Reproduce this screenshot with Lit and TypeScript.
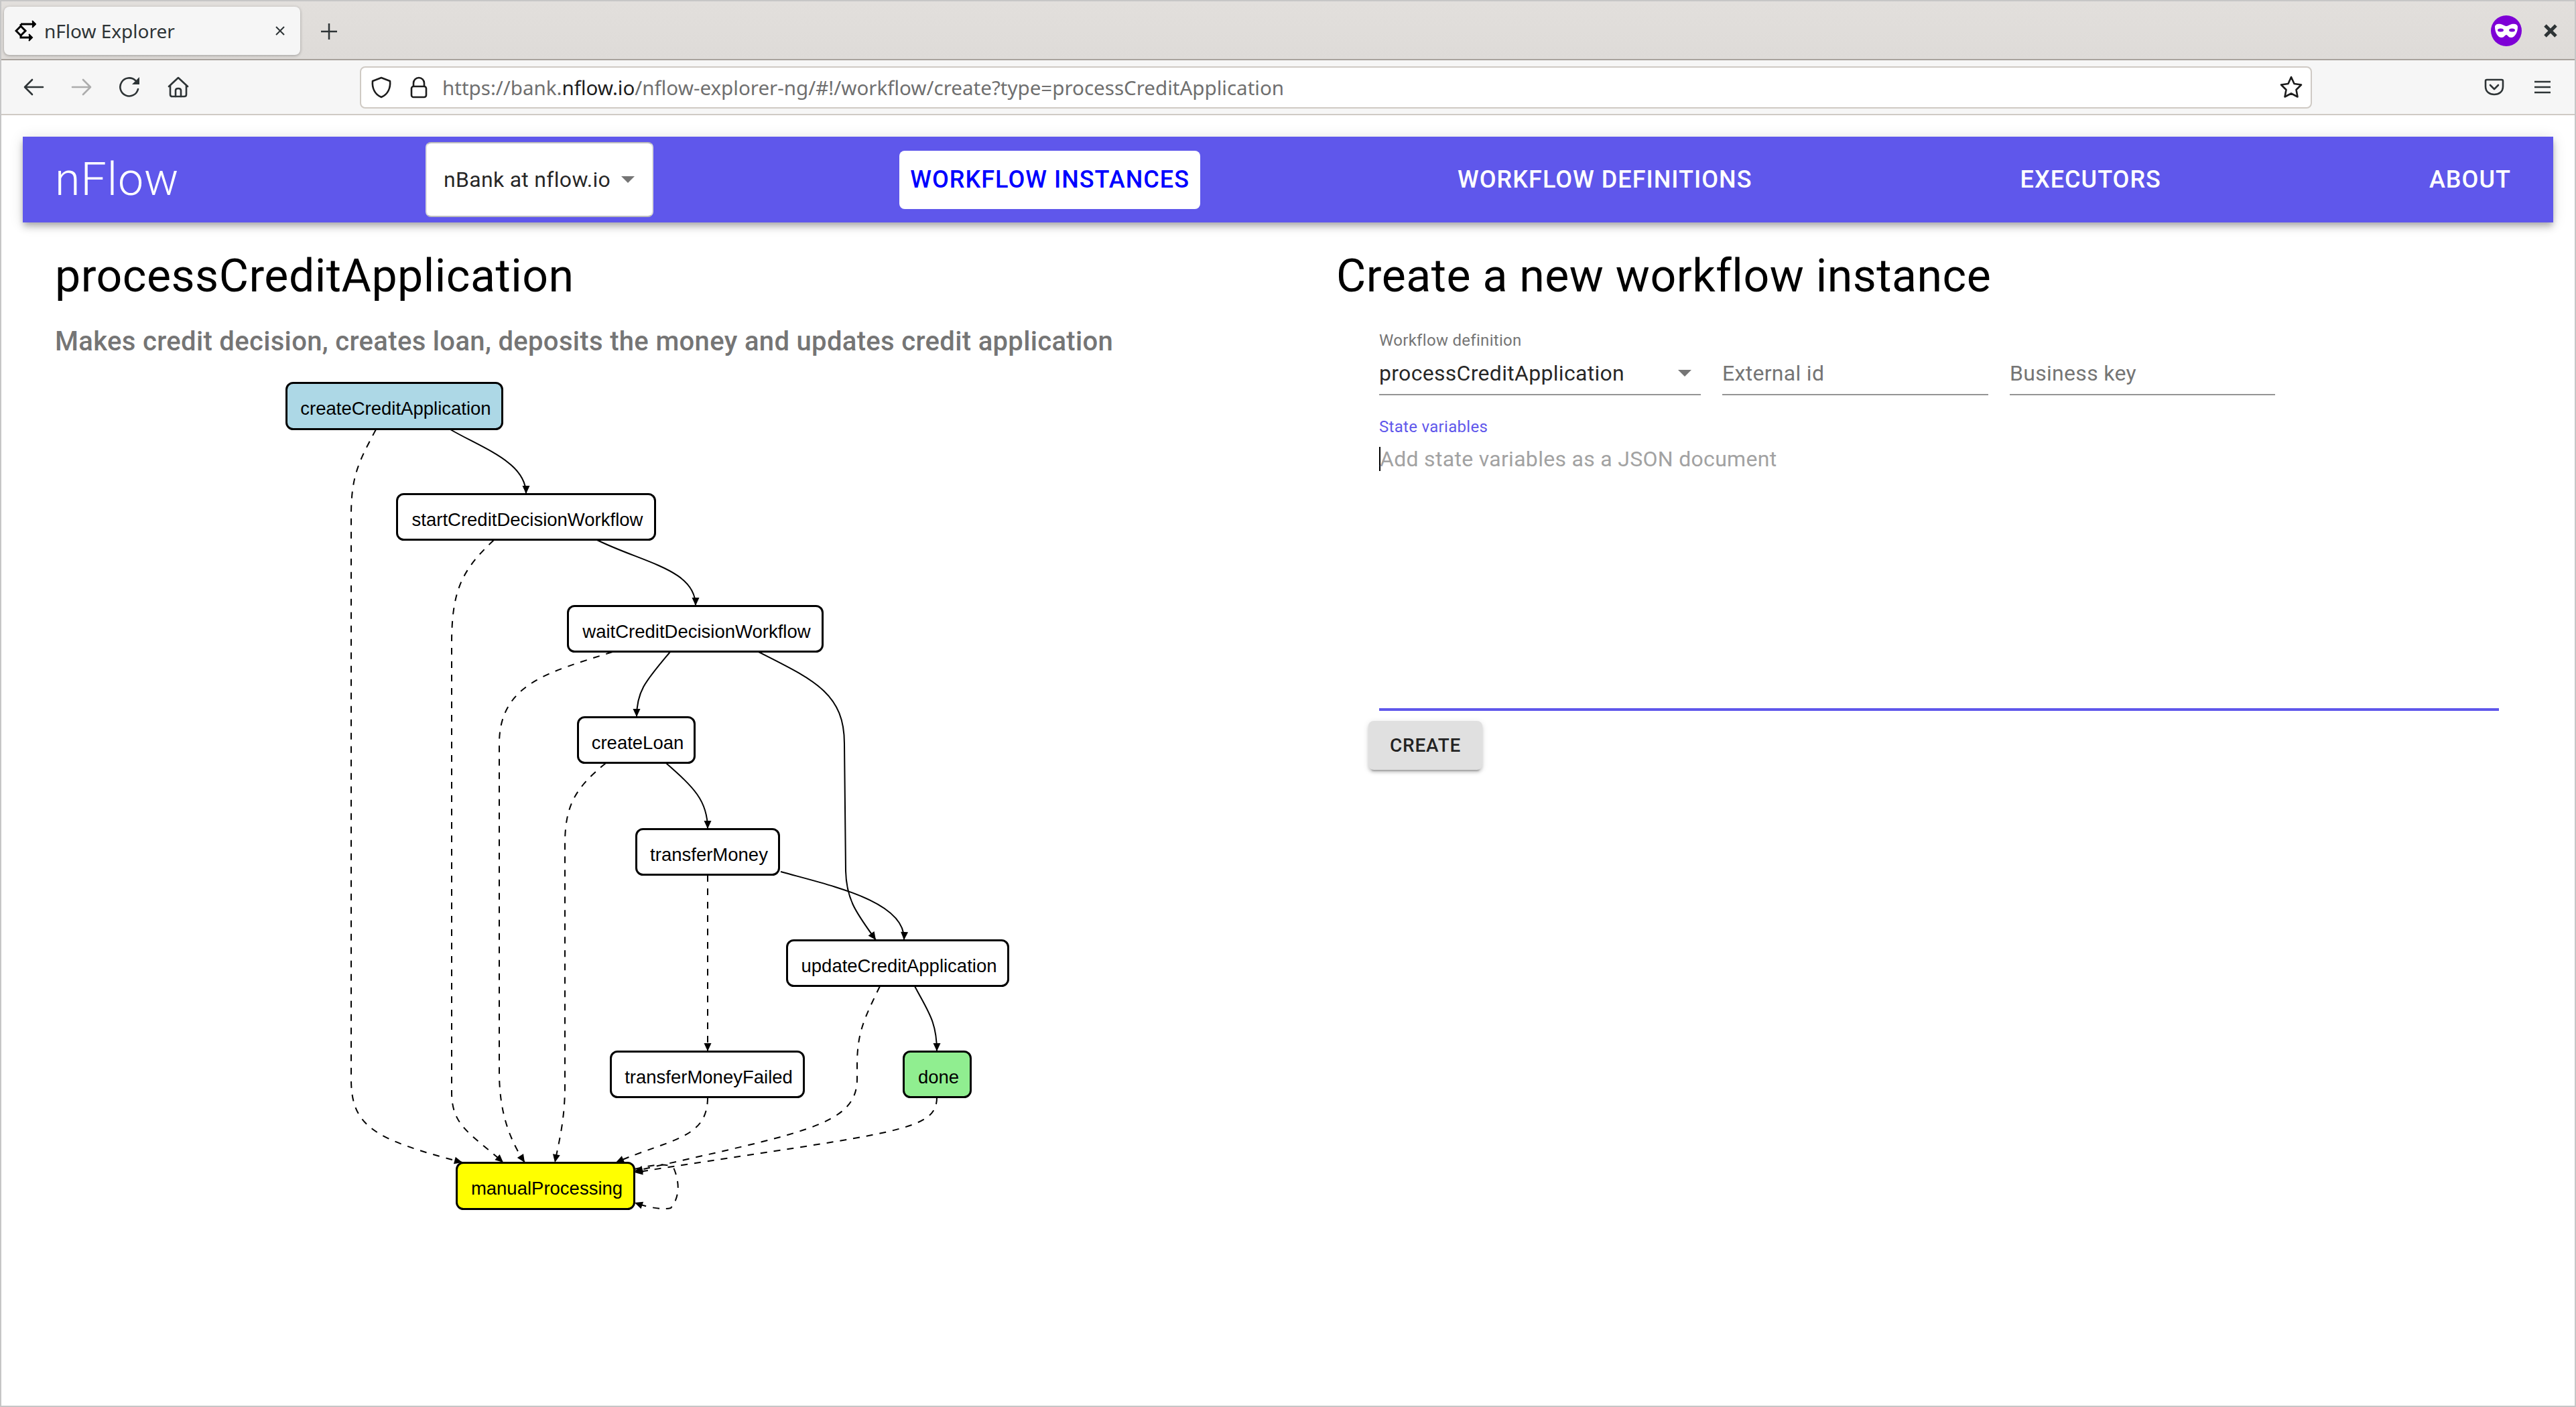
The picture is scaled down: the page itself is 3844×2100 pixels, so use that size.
import { LitElement, html, svg, css } from 'lit'
import { customElement } from 'lit/decorators.js'

interface GraphNode { name: string, x: number, y: number, w: number, h: number, fill: string }
interface GraphEdge { d: string, dashed?: boolean }

const NODES: GraphNode[] = [
  { name: 'createCreditApplication', x: 426, y: 570, w: 325, h: 72, fill: '#add8e6' },
  { name: 'startCreditDecisionWorkflow', x: 591, y: 736, w: 388, h: 71, fill: '#fff' },
  { name: 'waitCreditDecisionWorkflow', x: 846, y: 903, w: 383, h: 71, fill: '#fff' },
  { name: 'createLoan', x: 861, y: 1069, w: 177, h: 71, fill: '#fff' },
  { name: 'transferMoney', x: 948, y: 1236, w: 216, h: 71, fill: '#fff' },
  { name: 'updateCreditApplication', x: 1173, y: 1402, w: 333, h: 71, fill: '#fff' },
  { name: 'transferMoneyFailed', x: 910, y: 1568, w: 291, h: 71, fill: '#fff' },
  { name: 'done', x: 1347, y: 1568, w: 103, h: 71, fill: '#90ee90' },
  { name: 'manualProcessing', x: 680, y: 1734, w: 268, h: 72, fill: '#ffff00' }
]

const EDGES: GraphEdge[] = [
  { d: 'M672,641 C720,669 785,690 785,737' },
  { d: 'M561,641 C535,690 524,710 524,770 L524,1610 C524,1680 555,1700 690,1735', dashed: true },
  { d: 'M891,806 C960,840 1038,850 1038,904' },
  { d: 'M737,806 C690,850 674,880 674,960 L674,1630 C674,1680 700,1690 751,1735', dashed: true },
  { d: 'M1000,973 C965,1015 950,1030 950,1070' },
  { d: 'M914,973 C820,1003 745,1020 745,1110 L745,1600 C745,1660 760,1700 783,1735', dashed: true },
  { d: 'M1132,973 C1215,1015 1260,1035 1260,1110 L1262,1300 C1263,1345 1280,1365 1307,1403' },
  { d: 'M994,1139 C1035,1175 1056,1195 1056,1237' },
  { d: 'M904,1139 C860,1175 843,1200 843,1260 L843,1620 C843,1670 835,1700 828,1735', dashed: true },
  { d: 'M1165,1301 C1240,1322 1352,1345 1349,1403' },
  { d: 'M1056,1306 L1056,1569', dashed: true },
  { d: 'M1056,1638 C1056,1700 1000,1700 919,1735', dashed: true },
  { d: 'M1313,1472 C1290,1520 1279,1540 1279,1590 L1279,1610 C1279,1680 1200,1690 947,1748', dashed: true },
  { d: 'M1365,1472 C1385,1510 1398,1525 1398,1569' },
  { d: 'M1398,1638 C1398,1690 1330,1690 947,1750', dashed: true },
  { d: 'M947,1745 C975,1738 1000,1735 1006,1745 C1016,1770 1012,1790 1001,1803 C990,1806 970,1803 947,1795', dashed: true }
]

@customElement('browser-chrome')
export class BrowserChrome extends LitElement {
  static styles = css`
    :host {
      display: block;
      font-family: "Noto Sans", sans-serif;
    }
    .tabbar {
      display: flex;
      align-items: flex-start;
      height: 88px;
      padding: 8px 0 0 4px;
      box-sizing: border-box;
      background: linear-gradient(#e2dfdc, #dedbd8);
      border-bottom: 2px solid #a8a29d;
    }
    .tab {
      display: flex;
      align-items: center;
      width: 442px;
      height: 72px;
      box-sizing: border-box;
      padding: 0 22px 0 16px;
      background: #f6f6f6;
      border-radius: 8px;
      box-shadow: 0 1px 4px rgba(0, 0, 0, 0.3);
      color: #2e3436;
      font-size: 28px;
    }
    .favicon { margin-right: 12px; flex: none; }
    .tab-title { flex: 1; }
    .newtab { margin: 24px 0 0 30px; }
    .window-controls {
      display: flex;
      align-items: center;
      margin-left: auto;
      gap: 33px;
      padding: 13px 26px 0 0;
    }
    .toolbar {
      display: flex;
      align-items: center;
      height: 82px;
      box-sizing: border-box;
      padding: 0 12px;
      background: #f6f6f6;
      border-bottom: 2px solid #cfcac4;
    }
    .tool {
      display: flex;
      justify-content: center;
      align-items: center;
      width: 72px;
      height: 60px;
      flex: none;
    }
    .urlbar {
      display: flex;
      align-items: center;
      width: 2913px;
      height: 63px;
      margin-left: 235px;
      box-sizing: border-box;
      padding: 0 12px 0 14px;
      background: #fff;
      border: 2px solid #cfcac4;
      border-radius: 8px;
    }
    .url-shield { margin-right: 27px; flex: none; }
    .url-lock { margin-right: 22px; flex: none; }
    .url {
      font-size: 29.55px;
      color: #6f6f6f;
      white-space: nowrap;
    }
    .url b { font-weight: 400; color: #1c1c1c; }
    .star { margin-left: auto; }
    .right-tools { display: flex; margin-left: auto; }
  `

  render () {
    return html`
      <div class="tabbar">
        <div class="tab">
          <svg class="favicon" width="32" height="32" viewBox="0 0 32 32" fill="none" stroke="#000" stroke-width="3">
            <path d="M9,6 L9,9 L16,16 L9,23 L2,16 L9,9"/>
            <path d="M9,6 L28,6"/>
            <path d="M26,1 L31,6 L26,11" fill="#000" stroke-width="2"/>
            <path d="M9,23 L9,26 L23,26"/>
            <path d="M21,21 L26,26 L21,31" fill="#000" stroke-width="2"/>
          </svg>
          <span class="tab-title">nFlow Explorer</span>
          <svg width="16" height="16" viewBox="0 0 16 16" stroke="#2e3436" stroke-width="2">
            <path d="M2,2 L14,14 M14,2 L2,14"/>
          </svg>
        </div>
        <svg class="newtab" width="26" height="26" viewBox="0 0 26 26" stroke="#2e3436" stroke-width="2.5">
          <path d="M13,1 L13,25 M1,13 L25,13"/>
        </svg>
        <div class="window-controls">
          <svg width="46" height="46" viewBox="-23 -23 46 46">
            <circle r="23" fill="#7e00d6"/>
            <path fill="#fff" d="M-17,-6 C-17,-10 -12,-11 -8,-10 C-4,-9 -2,-7 0,-7 C2,-7 4,-9 8,-10 C12,-11 17,-10 17,-6 C17,2 13,10 7,10 C3,10 2,6 0,6 C-2,6 -3,10 -7,10 C-13,10 -17,2 -17,-6Z"/>
            <ellipse cx="-8.5" cy="-1" rx="4.5" ry="2.5" fill="#7e00d6"/>
            <ellipse cx="8.5" cy="-1" rx="4.5" ry="2.5" fill="#7e00d6"/>
          </svg>
          <svg width="20" height="20" viewBox="0 0 20 20" stroke="#2e3436" stroke-width="5">
            <path d="M2,2 L18,18 M18,2 L2,18"/>
          </svg>
        </div>
      </div>
      <div class="toolbar">
        <div class="tool">
          <svg width="32" height="28" viewBox="0 0 32 28" fill="none" stroke="#2e3436" stroke-width="2.6" stroke-linecap="round" stroke-linejoin="round">
            <path d="M30,14 L3,14 M14,3 L3,14 L14,25"/>
          </svg>
        </div>
        <div class="tool">
          <svg width="32" height="28" viewBox="0 0 32 28" fill="none" stroke="#acacac" stroke-width="2.6" stroke-linecap="round" stroke-linejoin="round">
            <path d="M2,14 L29,14 M18,3 L29,14 L18,25"/>
          </svg>
        </div>
        <div class="tool">
          <svg width="32" height="32" viewBox="0 0 32 32" fill="none" stroke="#2e3436" stroke-width="2.6" stroke-linecap="round">
            <path d="M28,19 A13.5,13.5 0 1 1 24,6"/>
            <path d="M30,1 L30,12 L19,12Z" fill="#2e3436" stroke="none"/>
          </svg>
        </div>
        <div class="tool">
          <svg width="32" height="32" viewBox="0 0 32 32" fill="none" stroke="#2e3436" stroke-width="2.6" stroke-linecap="round" stroke-linejoin="round">
            <path d="M2,15 L16,2 L30,15"/>
            <path d="M4,14 L4,27 Q4,30 7,30 L25,30 Q28,30 28,27 L28,14"/>
            <path d="M12,30 L12,21 Q12,18 16,18 Q20,18 20,21 L20,30"/>
          </svg>
        </div>
        <div class="urlbar">
          <svg class="url-shield" width="32" height="33" viewBox="0 0 32 33" fill="none" stroke="#1c1c1c" stroke-width="2.6" stroke-linejoin="round">
            <path d="M16,2 L29,7 C30,17 26,27 16,31 C6,27 2,17 3,7Z"/>
          </svg>
          <svg class="url-lock" width="26" height="33" viewBox="0 0 26 33" fill="none" stroke="#1c1c1c" stroke-width="2.6">
            <rect x="2" y="15" width="22" height="16" rx="3"/>
            <path d="M5,15 L5,10 A8,8 0 0 1 21,10 L21,15"/>
          </svg>
          <span class="url">https://bank.<b>nflow.io</b>/nflow-explorer-ng/#!/workflow/create?type=processCreditApplication</span>
          <svg class="star" width="34" height="34" viewBox="0 0 34 34" fill="none" stroke="#1c1c1c" stroke-width="2.6" stroke-linejoin="round">
            <path d="M17,2 L21.5,12 L32,13.5 L24.5,21 L26.5,31.5 L17,26.5 L7.5,31.5 L9.5,21 L2,13.5 L12.5,12Z"/>
          </svg>
        </div>
        <div class="right-tools">
          <div class="tool">
            <svg width="30" height="26" viewBox="0 0 30 26" fill="none" stroke="#2e3436" stroke-width="2.6" stroke-linecap="round" stroke-linejoin="round">
              <path d="M4,2 L26,2 Q28,2 28,4 L28,12 C28,20 22,24 15,24 C8,24 2,20 2,12 L2,4 Q2,2 4,2Z"/>
              <path d="M9,10 L15,16 L21,10"/>
            </svg>
          </div>
          <div class="tool">
            <svg width="24" height="20" viewBox="0 0 24 20" stroke="#2e3436" stroke-width="2.6">
              <path d="M0,2 L24,2 M0,10 L24,10 M0,18 L24,18"/>
            </svg>
          </div>
        </div>
      </div>
    `
  }
}

@customElement('workflow-graph')
export class WorkflowGraph extends LitElement {
  static styles = css`
    :host { display: block; }
    svg { display: block; }
    .edge { fill: none; stroke: #000; stroke-width: 2; }
    .edge.dashed { stroke-dasharray: 10 10; }
    .node { stroke: #000; stroke-width: 3; }
    .label {
      font-family: "Liberation Sans", Arial, sans-serif;
      font-size: 27.5px;
      fill: #000;
    }
  `

  render () {
    // graph coordinates are kept in page pixels, the viewBox shifts them in place
    return html`
      <svg width="1160" height="1290" viewBox="400 550 1160 1290">
        <defs>
          <marker id="arrow" markerUnits="userSpaceOnUse" markerWidth="14" markerHeight="14" viewBox="0 0 14 14" refX="13" refY="7" orient="auto">
            <path d="M1,1.5 L13,7 L1,12.5Z" fill="#000"/>
          </marker>
        </defs>
        ${NODES.map(n => svg`
          <rect class="node" x=${n.x + 1.5} y=${n.y + 1.5} width=${n.w - 3} height=${n.h - 3} rx="10" fill=${n.fill}></rect>
          <text class="label" x=${n.x + n.w / 2 + 2} y=${n.y + 49} text-anchor="middle">${n.name}</text>
        `)}
        ${EDGES.map(e => svg`
          <path class="edge ${e.dashed ? 'dashed' : ''}" d=${e.d} marker-end="url(#arrow)"></path>
        `)}
      </svg>
    `
  }
}

@customElement('app-root')
export class AppRoot extends LitElement {
  static styles = css`
    :host {
      display: block;
      width: 3844px;
      height: 2100px;
      box-sizing: border-box;
      border: 2px solid #c6c6c6;
      background: #fff;
      overflow: hidden;
      font-family: Roboto, sans-serif;
      color: #000;
    }
    .appbar {
      display: flex;
      align-items: center;
      height: 128px;
      margin: 32px 32px 0;
      padding: 0 47px 0 48px;
      background: #5f57eb;
      color: #fff;
      box-shadow: 0 4px 8px -2px rgba(0, 0, 0, 0.2), 0 8px 10px 0 rgba(0, 0, 0, 0.14), 0 2px 20px 0 rgba(0, 0, 0, 0.12);
    }
    .logo {
      flex: 0 0 553px;
      font-size: 68px;
      font-weight: 300;
      letter-spacing: 1px;
    }
    .env {
      display: flex;
      align-items: center;
      justify-content: space-between;
      width: 340px;
      height: 112px;
      box-sizing: border-box;
      padding: 0 26px 0 25px;
      background: #fff;
      border: 2px solid #bdbdbd;
      border-left-color: #ddd;
      border-right-color: #ddd;
      border-radius: 8px;
      color: rgba(0, 0, 0, 0.87);
      font-size: 32px;
      letter-spacing: 0.3px;
    }
    .caret-down {
      width: 0;
      height: 0;
      border-left: 10px solid transparent;
      border-right: 10px solid transparent;
      border-top: 10px solid #757575;
    }
    nav {
      display: flex;
      align-items: center;
      gap: 368px;
      margin-left: auto;
    }
    .nav-item {
      padding: 0 16px;
      height: 87px;
      line-height: 87px;
      border-radius: 8px;
      font-size: 36px;
      font-weight: 500;
      letter-spacing: 1.03px;
      white-space: nowrap;
    }
    .nav-item.active { background: #fff; color: #00f; }
    main {
      display: grid;
      grid-template-columns: 1912px 1fr;
      padding: 38px 0 0 80px;
    }
    h2 {
      margin: 0;
      font-size: 68px;
      font-weight: 400;
      line-height: 84px;
      letter-spacing: 0.5px;
    }
    .summary {
      margin: 24px 0 8px;
      font-size: 40px;
      font-weight: 500;
      line-height: 64px;
      letter-spacing: 0.33px;
      color: #757575;
    }
    .graph { margin-left: 318px; }
    .form { padding: 40px 0 0 64px; }
    .fields {
      display: grid;
      grid-template-columns: 480px 397px 396px;
      column-gap: 32px;
    }
    .field { border-bottom: 2px solid #949494; }
    .field-label {
      height: 28px;
      line-height: 28px;
      font-size: 24px;
      letter-spacing: 0.3px;
      color: #757575;
    }
    .field-value {
      display: flex;
      align-items: center;
      justify-content: space-between;
      height: 66px;
      box-sizing: border-box;
      padding: 3px 14px 0 0;
      font-size: 32px;
      letter-spacing: 0.3px;
      color: rgba(0, 0, 0, 0.87);
    }
    .field-value.empty { color: #757575; }
    .field.bare .field-label { visibility: hidden; }
    .vars {
      width: 1671px;
      margin-top: 33px;
      height: 438px;
      box-sizing: border-box;
      border-bottom: 4px solid #5f57eb;
    }
    .vars .field-label { color: #5f57eb; }
    .placeholder {
      display: flex;
      align-items: center;
      height: 36px;
      margin-top: 16px;
      font-size: 32px;
      letter-spacing: 0.3px;
      color: #a2a2a2;
    }
    .text-caret {
      width: 2px;
      height: 36px;
      margin-right: -1px;
      background: #000;
    }
    .create {
      display: block;
      width: 170px;
      height: 73px;
      margin: 15px 0 0 -16px;
      padding: 0;
      border: 0;
      border-radius: 8px;
      background: #e0e0e0;
      color: rgba(0, 0, 0, 0.87);
      font-family: inherit;
      font-size: 28px;
      font-weight: 500;
      letter-spacing: 0.8px;
      box-shadow: 0 6px 2px -4px rgba(0, 0, 0, 0.2), 0 4px 4px 0 rgba(0, 0, 0, 0.14), 0 2px 10px 0 rgba(0, 0, 0, 0.12);
    }
  `

  render () {
    return html`
      <browser-chrome></browser-chrome>
      <header class="appbar">
        <div class="logo">nFlow</div>
        <div class="env">nBank at nflow.io<span class="caret-down"></span></div>
        <nav>
          <div class="nav-item active">WORKFLOW INSTANCES</div>
          <div class="nav-item">WORKFLOW DEFINITIONS</div>
          <div class="nav-item">EXECUTORS</div>
          <div class="nav-item">ABOUT</div>
        </nav>
      </header>
      <main>
        <section>
          <h2>processCreditApplication</h2>
          <div class="summary">Makes credit decision, creates loan, deposits the money and updates credit application</div>
          <workflow-graph class="graph"></workflow-graph>
        </section>
        <section>
          <h2>Create a new workflow instance</h2>
          <div class="form">
            <div class="fields">
              <div class="field">
                <div class="field-label">Workflow definition</div>
                <div class="field-value">processCreditApplication<span class="caret-down"></span></div>
              </div>
              <div class="field bare">
                <div class="field-label">&nbsp;</div>
                <div class="field-value empty">External id</div>
              </div>
              <div class="field bare">
                <div class="field-label">&nbsp;</div>
                <div class="field-value empty">Business key</div>
              </div>
            </div>
            <div class="vars">
              <div class="field-label">State variables</div>
              <div class="placeholder"><span class="text-caret"></span>Add state variables as a JSON document</div>
            </div>
            <button class="create">CREATE</button>
          </div>
        </section>
      </main>
    `
  }
}
